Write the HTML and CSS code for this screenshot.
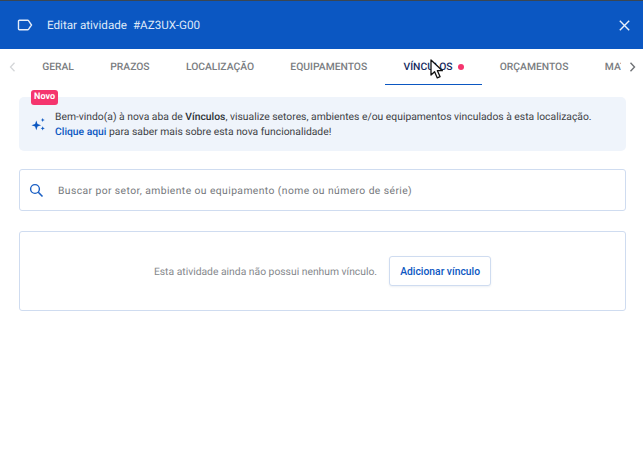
FILE: index.html
```html
<!DOCTYPE html>
<html lang="pt-BR">
<head>
<meta charset="utf-8">
<title>Editar atividade</title>
<link rel="stylesheet" href="styles.css">
</head>
<body>
<header class="header">
  <div class="title-group">
    <svg class="label-icon" width="16" height="12" viewBox="0 0 16 12"><path d="M1.500 2.200c0-.5.4-.9.9-.9h8.300c.3 0 .6.1.8.4l3 4.300-3 4.300c-.2.3-.5.4-.8.4H2.400c-.5 0-.9-.4-.9-.9z" fill="none" stroke="#e3ecf9" stroke-width="1.400"/></svg>
    <span class="title">Editar atividade</span>
    <span class="title code">#AZ3UX-G00</span>
  </div>
  <svg class="close-icon" width="11" height="11" viewBox="0 0 11 11"><path d="M.8.8l9.400 9.400M10.200.8L.8 10.200" stroke="#e9f0fb" stroke-width="1.400" fill="none"/></svg>
</header>
<nav class="tabs">
  <div class="chev">
    <svg width="7" height="10" viewBox="0 0 7 10"><path d="M5.500.8L1.500 5l4 4.200" fill="none" stroke="#d4d6d9" stroke-width="1.300"/></svg>
  </div>
  <div class="tab-list">
    <span class="tab">Geral</span>
    <span class="tab">Prazos</span>
    <span class="tab">Localização</span>
    <span class="tab">Equipamentos</span>
    <span class="tab active">Vínculos<i class="dot"></i></span>
    <span class="tab">Orçamentos</span>
    <span class="tab">Materiais</span>
  </div>
  <div class="chev">
    <svg width="7" height="10" viewBox="0 0 7 10"><path d="M1.500.8l4 4.200-4 4.200" fill="none" stroke="#6f7276" stroke-width="1.400"/></svg>
  </div>
</nav>
<main class="content">
  <section class="notice">
    <span class="badge">Novo</span>
    <svg class="spark" width="16" height="16" viewBox="0 0 16 16" fill="#0b57c2"><path d="M5.300 3.400l1.200 3.600 3.600 1.300-3.600 1.300-1.200 3.600-1.200-3.600L.5 8.300l3.600-1.300z"/><path d="M11.700.9l.6 1.500 1.500.6-1.500.6-.6 1.500-.6-1.500L9.600 3l1.500-.6z"/><path d="M11.700 9.200l.6 1.500 1.500.6-1.500.6-.6 1.500-.6-1.500-1.500-.6 1.500-.6z"/></svg>
    <p class="notice-text">Bem-vindo(a) à nova aba de <b>Vínculos</b>, visualize setores, ambientes e/ou equipamentos vinculados à esta localização.<br><a class="link">Clique aqui</a> para saber mais sobre esta nova funcionalidade!</p>
  </section>
  <section class="search">
    <svg width="15" height="15" viewBox="0 0 15 15"><circle cx="6" cy="6" r="4.400" fill="none" stroke="#1a5fc4" stroke-width="1.400"/><path d="M9.300 9.300l4.200 4.200" stroke="#1a5fc4" stroke-width="1.600" fill="none"/></svg>
    <span class="placeholder">Buscar por setor, ambiente ou equipamento (nome ou número de série)</span>
  </section>
  <section class="empty">
    <span class="empty-text">Esta atividade ainda não possui nenhum vínculo.</span>
    <button class="add">Adicionar vínculo</button>
  </section>
</main>
<svg class="cursor" width="15" height="21" viewBox="0 0 15 21"><path d="M1 1v15l3.600-3.300 2.700 6.200 2.800-1.200-2.700-6h5z" fill="#fff" stroke="#111" stroke-width="1.300" stroke-linejoin="round"/></svg>
</body>
</html>
```
FILE: styles.css
```css
* { box-sizing: border-box; }
html, body { margin: 0; height: 100%; }
body {
  position: relative;
  width: 643px;
  height: 464px;
  overflow: hidden;
  background: #fff;
  font-family: Roboto, "Liberation Sans", sans-serif;
  text-rendering: geometricPrecision;
  border-top: 1px solid #3a4652;
}
.header {
  height: 48px;
  background: #0b57c2;
  display: flex;
  align-items: center;
  justify-content: space-between;
  padding: 0 13px 0 17px;
}
.title-group { display: flex; align-items: center; }
.label-icon { margin-right: 14px; }
.title { font-size: 11.650px; color: #dfe9f8; }
.code { margin-left: 6px; }
.close-icon { display: block; }
.tabs {
  height: 36px;
  display: flex;
  align-items: stretch;
}
.chev {
  flex: none;
  width: 24px;
  display: flex;
  align-items: center;
  justify-content: center;
}
.chev:last-child { width: 22px; }
.tab-list {
  flex: 1;
  min-width: 0;
  display: flex;
  overflow: hidden;
}
.tab {
  flex: none;
  display: flex;
  align-items: center;
  padding: 0 18.150px;
  font-size: 10.330px;
  font-weight: 500;
  text-transform: uppercase;
  color: #7a7d81;
  border-bottom: 1px solid transparent;
}
.tab.active {
  color: #14295e;
  border-bottom: 1px solid #0b57c2;
  padding-right: 18px;
}
.dot {
  width: 6px;
  height: 6px;
  border-radius: 50%;
  background: #f5356e;
  margin-left: 5px;
}
.content {
  padding: 12px 17px 0 19px;
  display: flex;
  flex-direction: column;
}
.notice {
  position: relative;
  height: 54px;
  border-radius: 5px;
  background: #eff4fb;
  display: flex;
  align-items: center;
  padding: 0 12px;
  gap: 8px;
}
.badge {
  position: absolute;
  left: 12px;
  top: -7px;
  height: 15px;
  width: 27px;
  border-radius: 3px;
  background: #f5356e;
  color: #fff;
  font-size: 9px;
  font-weight: 700;
  line-height: 15px;
  text-align: center;
}
.spark { flex: none; margin-top: 1px; }
.notice-text {
  margin: 0;
  font-size: 10.330px;
  line-height: 15px;
  color: #3c4043;
}
.notice-text b { font-weight: 500; color: #2b2f33; }
.link { color: #0b57c2; font-weight: 500; }
.search {
  margin-top: 18px;
  height: 42px;
  border: 1px solid #cfdcf0;
  border-radius: 3px;
  display: flex;
  align-items: center;
  padding: 0 9px;
  gap: 14px;
}
.placeholder {
  padding-top: 1px;
  font-size: 10.330px;
  letter-spacing: .415px;
  color: #75787c;
}
.empty {
  margin-top: 20px;
  height: 80px;
  border: 1px solid #cfdcf0;
  border-radius: 3px;
  display: flex;
  align-items: center;
  justify-content: center;
  gap: 12px;
}
.empty-text { font-size: 10.330px; color: #85888c; }
.add {
  height: 30px;
  width: 102px;
  padding: 0;
  border: 1px solid #cfdcf0;
  border-radius: 3px;
  background: #fff;
  color: #0b57c2;
  font: 500 10.330px Roboto, "Liberation Sans", sans-serif;
  box-shadow: 0 1px 2px rgba(20, 60, 120, .08);
}
.cursor {
  position: absolute;
  left: 430px;
  top: 58px;
}
```
